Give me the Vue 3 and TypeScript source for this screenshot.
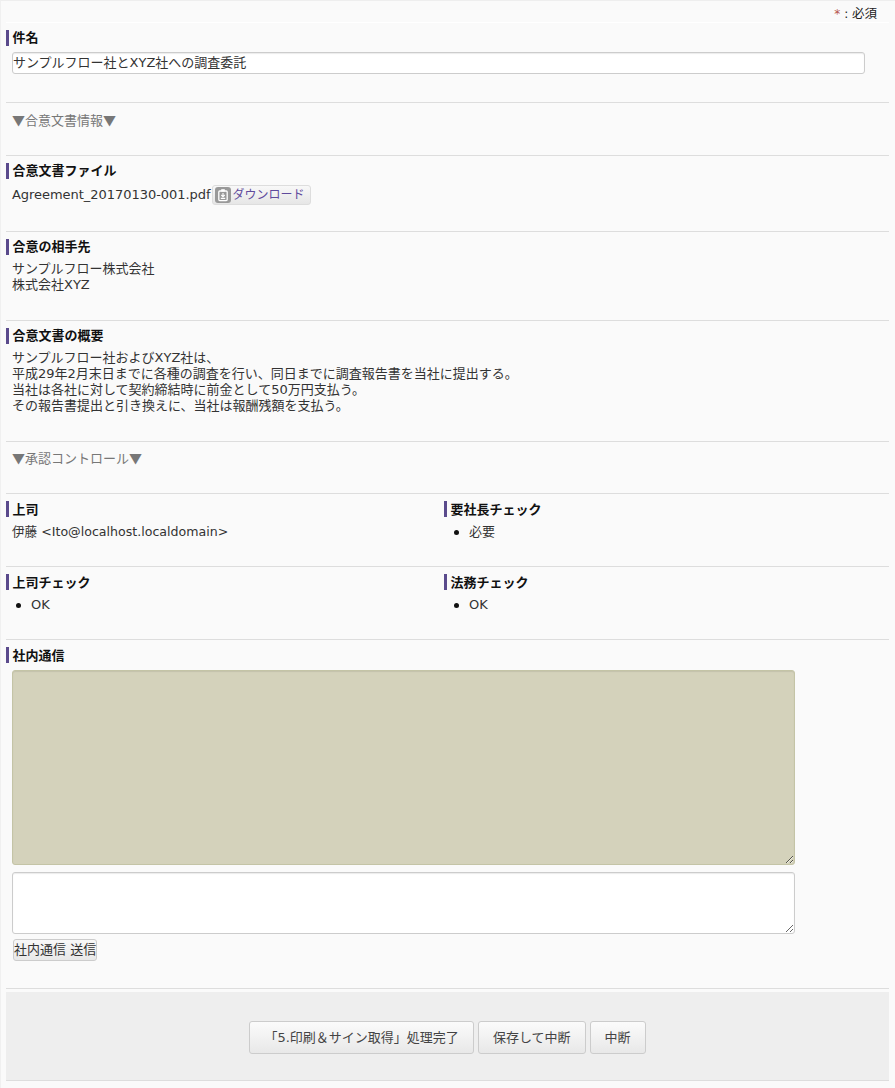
<script setup lang="ts">
const subject = 'サンプルフロー社とXYZ社への調査委託'
</script>

<template>
  <div class="page">
    <div class="req"><span class="star">*</span>: <span class="must">必須</span></div>

    <section class="row up row-input">
      <h3 class="lbl">件名</h3>
      <input class="text" type="text" :value="subject" />
    </section>

    <section class="row divider">
      <p class="sec">▼合意文書情報▼</p>
    </section>

    <section class="row up">
      <h3 class="lbl">合意文書ファイル</h3>
      <div class="val file">
        <span class="fname">Agreement_20170130-001.pdf</span>
        <a class="dl">
          <span class="dl-ico">
            <svg width="14" height="14" viewBox="0 0 14 14">
              <rect x="2.8" y="3" width="8.4" height="9.6" rx="1" fill="none" stroke="#fff" stroke-width="1.3" />
              <rect x="5.2" y="1.2" width="3.6" height="2.4" fill="#fff" />
              <path d="M7 5v3.4M5.3 7 7 8.8 8.7 7M4.8 10.4h4.4" fill="none" stroke="#fff" stroke-width="1.1" />
            </svg>
          </span>
          ダウンロード
        </a>
      </div>
    </section>

    <section class="row up up-text">
      <h3 class="lbl">合意の相手先</h3>
      <div class="val">サンプルフロー株式会社<br />株式会社XYZ</div>
    </section>

    <section class="row up up-text">
      <h3 class="lbl">合意文書の概要</h3>
      <div class="val">
        サンプルフロー社およびXYZ社は、<br />
        平成29年2月末日までに各種の調査を行い、同日までに調査報告書を当社に提出する。<br />
        当社は各社に対して契約締結時に前金として50万円支払う。<br />
        その報告書提出と引き換えに、当社は報酬残額を支払う。
      </div>
    </section>

    <section class="row divider divider-short">
      <p class="sec">▼承認コントロール▼</p>
    </section>

    <section class="row cols">
      <div>
        <h3 class="lbl">上司</h3>
        <div class="val mail">伊藤 &lt;Ito@localhost.localdomain&gt;</div>
      </div>
      <div>
        <h3 class="lbl">要社長チェック</h3>
        <ul class="list"><li>必要</li></ul>
      </div>
    </section>

    <section class="row cols">
      <div>
        <h3 class="lbl">上司チェック</h3>
        <ul class="list"><li>OK</li></ul>
      </div>
      <div>
        <h3 class="lbl">法務チェック</h3>
        <ul class="list"><li>OK</li></ul>
      </div>
    </section>

    <section class="row row-comm">
      <h3 class="lbl">社内通信</h3>
      <textarea class="area log" readonly></textarea>
      <textarea class="area input"></textarea>
      <button class="send" type="button">社内通信 送信</button>
    </section>

    <footer class="foot">
      <button class="act" type="button">「5.印刷＆サイン取得」処理完了</button>
      <button class="act" type="button">保存して中断</button>
      <button class="act" type="button">中断</button>
    </footer>
  </div>
</template>

<style>
html, body { margin: 0; background: #fafafa; }
</style>

<style scoped>
.page {
  box-sizing: border-box;
  width: 895px;
  height: 1088px;
  padding: 0 6px 0 5px;
  border-top: 1px solid #eee;
  border-left: 1px solid #f0f0f0;
  background: #fafafa;
  color: #333;
  font: 13px/16px "DejaVu Sans", "Noto Sans CJK JP", sans-serif;
}
.req {
  height: 22px;
  padding: 5px 12px 0 0;
  box-sizing: border-box;
  border-bottom: 1px solid #fff;
  text-align: right;
  font-size: 12px;
  line-height: 16px;
  color: #222;
}
.must { font-size: 12.5px; }
.star { color: #b5544a; margin-right: 4px; }
.row {
  padding: 7px 0 26px;
  border-bottom: 1px solid #ddd;
}
.up .lbl { margin-bottom: 6px; line-height: 16px; }
.up { padding-bottom: 26px; }
.up-text { padding-bottom: 27px; }
.row-input { padding-bottom: 28px; }
.divider { padding: 9px 0 0 6px; height: 43px; }
.divider-short { padding-top: 8px; }
.sec {
  margin: 0;
  color: #777;
  font-family: "Noto Sans CJK JP", sans-serif;
  line-height: 16px;
}
.lbl {
  margin: 0 0 7px;
  height: 16px;
  padding-left: 3.5px;
  border-left: 3px solid #5a4a8c;
  color: #111;
  font-size: 13px;
  line-height: 17px;
  font-weight: 700;
}
.val { padding-left: 6px; }
.mail { font-size: 12.6px; }
.text {
  display: block;
  box-sizing: border-box;
  width: 853px;
  height: 22px;
  margin: 0 0 0 6px;
  padding: 0 0 4px 0;
  border: 1px solid #ccc;
  border-radius: 3px;
  background: #fff;
  box-shadow: inset 0 1px 1px rgba(0, 0, 0, 0.08);
  color: #333;
  font: inherit;
  outline: none;
}
.file { display: flex; align-items: center; height: 20px; }
.fname { letter-spacing: -0.04px; }
.dl {
  display: inline-flex;
  align-items: center;
  gap: 2px;
  box-sizing: border-box;
  height: 20px;
  width: 99px;
  margin-left: 1px;
  padding-left: 2px;
  border: 1px solid #ddd;
  border-radius: 3px;
  background: linear-gradient(#f8f8f8, #e6e6e6);
  color: #5f4a9c;
  font-size: 12px;
}
.dl-ico {
  display: inline-flex;
  align-items: center;
  justify-content: center;
  width: 16px;
  height: 16px;
  border-radius: 3px;
  background: #999;
}
.cols {
  display: grid;
  grid-template-columns: 438px 1fr;
}
.list { margin: 0; padding: 0 0 0 25px; list-style: none; }
.list li { position: relative; }
.list li::before {
  content: "";
  position: absolute;
  left: -15px;
  top: 6px;
  width: 5px;
  height: 5px;
  border-radius: 50%;
  background: #111;
}
.row-comm { padding-bottom: 27px; }
.area {
  display: block;
  box-sizing: border-box;
  width: 783px;
  margin-left: 6px;
  border-radius: 3px;
  font: inherit;
  outline: none;
}
.log {
  height: 195px;
  border: 1px solid #c4c4a6;
  background: #d4d2bb;
  box-shadow: inset 0 1px 1px rgba(0, 0, 0, 0.08);
}
.input {
  height: 62px;
  margin-top: 7px;
  border: 1px solid #ccc;
  background: #fff;
  box-shadow: inset 0 1px 1px rgba(0, 0, 0, 0.08);
}
.send {
  display: block;
  box-sizing: border-box;
  width: 84px;
  height: 22px;
  margin: 5px 0 0 7px;
  padding: 0;
  border: 1px solid #ccc;
  border-radius: 3px;
  background: linear-gradient(#f8f8f8, #e8e8e8);
  color: #333;
  white-space: nowrap;
  font: 13px/20px "DejaVu Sans", "Noto Sans CJK JP", sans-serif;
}
.foot {
  display: flex;
  justify-content: center;
  gap: 4px;
  box-sizing: border-box;
  height: 89px;
  margin-top: 3px;
  padding: 29px 0 0 0;
  border-bottom: 1px solid #ddd;
  background: #eee;
}
.act {
  box-sizing: border-box;
  height: 33px;
  padding: 0 14px;
  border: 1px solid #ccc;
  border-radius: 3px;
  background: linear-gradient(#fbfbfb, #e8e8e8);
  color: #444;
  font: 13px/16px "DejaVu Sans", "Noto Sans CJK JP", sans-serif;
}
</style>
